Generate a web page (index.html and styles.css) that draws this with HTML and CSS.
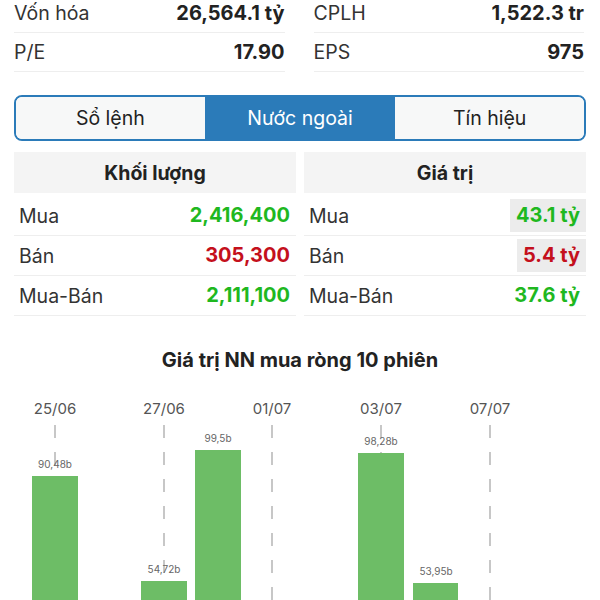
FILE: index.html
```html
<!DOCTYPE html>
<html lang="vi">
<head>
    <meta charset="UTF-8">
    <meta name="viewport" content="width=device-width, initial-scale=1.0">
    <title>Nước ngoài</title>
    <link rel="stylesheet" href="styles.css">
</head>
<body>
    <!-- Chỉ số cơ bản -->
    <div class="stats">
        <div class="stat-row"><span class="stat-label">Vốn hóa</span><span class="stat-value">26,564.1 tỷ</span></div>
        <div class="stat-row"><span class="stat-label">CPLH</span><span class="stat-value">1,522.3 tr</span></div>
        <div class="stat-row"><span class="stat-label">P/E</span><span class="stat-value">17.90</span></div>
        <div class="stat-row"><span class="stat-label">EPS</span><span class="stat-value">975</span></div>
    </div>

    <div class="tab-container">
        <button class="tab">Sổ lệnh</button>
        <button class="tab active">Nước ngoài</button>
        <button class="tab">Tín hiệu</button>
    </div>

    <!-- Giao dịch nước ngoài -->
    <div class="foreign">
        <div class="ftable">
            <div class="ftable-head">Khối lượng</div>
            <div class="frow"><span>Mua</span><span class="fval up">2,416,400</span></div>
            <div class="frow"><span>Bán</span><span class="fval down">305,300</span></div>
            <div class="frow"><span>Mua-Bán</span><span class="fval up">2,111,100</span></div>
        </div>
        <div class="ftable">
            <div class="ftable-head">Giá trị</div>
            <div class="frow"><span>Mua</span><span class="fval up marked">43.1 tỷ</span></div>
            <div class="frow"><span>Bán</span><span class="fval down marked">5.4 tỷ</span></div>
            <div class="frow"><span>Mua-Bán</span><span class="fval up">37.6 tỷ</span></div>
        </div>
    </div>

    <h3 class="chart-title">Giá trị NN mua ròng 10 phiên</h3>

    <svg class="chart" width="600" height="230" viewBox="0 0 600 230">
        <g class="grid">
            <line x1="55" y1="45" x2="55" y2="230"/>
            <line x1="164" y1="45" x2="164" y2="230"/>
            <line x1="272" y1="45" x2="272" y2="230"/>
            <line x1="381" y1="45" x2="381" y2="230"/>
            <line x1="490" y1="45" x2="490" y2="230"/>
        </g>
        <g class="dates">
            <text x="55" y="34">25/06</text>
            <text x="164" y="34">27/06</text>
            <text x="272" y="34">01/07</text>
            <text x="381" y="34">03/07</text>
            <text x="490" y="34">07/07</text>
        </g>
        <g class="bars">
            <rect x="32" y="96" width="46" height="134"/>
            <rect x="141" y="201" width="46" height="29"/>
            <rect x="195" y="70" width="46" height="160"/>
            <rect x="358" y="73" width="46" height="157"/>
            <rect x="413" y="203" width="45" height="27"/>
        </g>
        <g class="bar-labels">
            <text x="55" y="88">90,48b</text>
            <text x="164" y="193">54,72b</text>
            <text x="218" y="62">99,5b</text>
            <text x="381" y="65">98,28b</text>
            <text x="436" y="195">53,95b</text>
        </g>
    </svg>
</body>
</html>
```

FILE: styles.css
```css
body {
    font-family: Inter, "Noto Sans", sans-serif;
    background-color: white;
    color: #222;
    margin: 0;
    overflow: hidden;
}

.stats {
    display: grid;
    grid-template-columns: 1fr 1fr;
    column-gap: 29px;
    padding: 0 16px 0 14px;
    margin-top: -6px;
}

.stat-row {
    display: flex;
    justify-content: space-between;
    align-items: center;
    height: 38px;
    border-bottom: 1px solid #eeeeee;
    font-size: 19.5px;
}

.stat-label {
    color: #333;
}

.stat-value {
    font-weight: 700;
    font-size: 20px;
    color: #222;
}

.tab-container {
    display: flex;
    margin: 23px 14px 0;
    border: 2px solid #2b7bb9;
    border-radius: 8px;
    overflow: hidden;
    height: 46px;
    box-sizing: border-box;
}

.tab {
    flex: 1;
    background-color: #f7f8f8;
    border: none;
    font-family: inherit;
    font-size: 19.5px;
    color: #222;
    padding: 0;
}

.tab + .tab {
    border-left: 1px solid #2b7bb9;
}

.tab.active {
    background-color: #2b7bb9;
    color: white;
}

.foreign {
    display: flex;
    gap: 8px;
    margin: 11px 14px 0;
}

.ftable {
    flex: 1;
}

.ftable-head {
    background-color: #f4f4f4;
    height: 41px;
    margin-bottom: 3px;
    display: flex;
    align-items: center;
    justify-content: center;
    font-size: 19.5px;
    font-weight: 700;
}

.frow {
    display: flex;
    justify-content: space-between;
    align-items: center;
    height: 39px;
    border-bottom: 1px solid #eeeeee;
    padding-left: 5px;
    font-size: 19.5px;
    color: #333;
}

.fval {
    font-weight: 700;
    font-size: 20px;
    padding: 0 6px;
    height: 33px;
    line-height: 33px;
}

.fval.up {
    color: #1fb81f;
}

.fval.down {
    color: #c4101c;
}

.fval.marked {
    background-color: #ececec;
}

.chart-title {
    margin: 32px 0 0;
    text-align: center;
    font-size: 20px;
    font-weight: 700;
    color: #222;
}

.chart {
    display: block;
    margin-top: 8px;
}

.grid line {
    stroke: #b5b5b5;
    stroke-width: 1.5;
    stroke-dasharray: 13 14;
}

.dates text {
    font-size: 15px;
    fill: #555;
    text-anchor: middle;
}

.bars rect {
    fill: #6dbd66;
}

.bar-labels text {
    font-size: 10px;
    fill: #666;
    text-anchor: middle;
}
```
